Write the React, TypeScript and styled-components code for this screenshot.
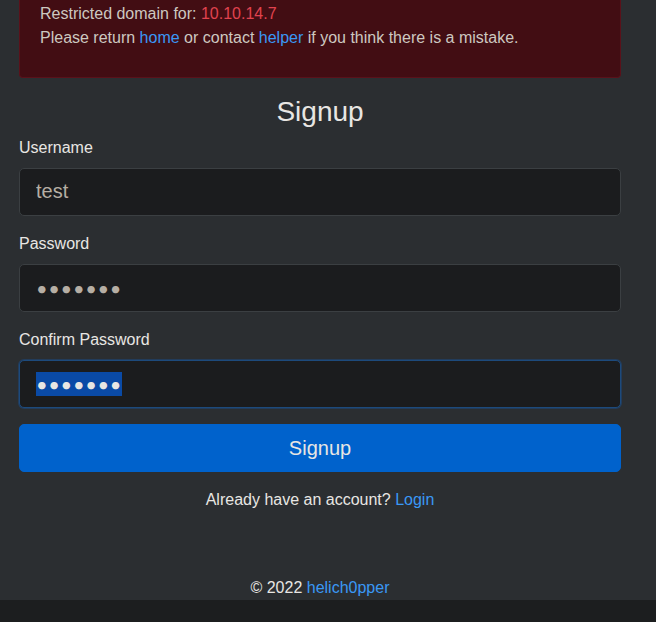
import React, { useEffect, useRef } from "react";
import styled, { createGlobalStyle } from "styled-components";

const GlobalStyle = createGlobalStyle`
  html, body {
    margin: 0;
    padding: 0;
    background: #1c1e1f;
  }
  body {
    font-family: "Liberation Sans", Arial, sans-serif;
    font-size: 16px;
    line-height: 1.5;
    color: #e8e6e3;
  }
  * { box-sizing: border-box; }
`;

const Page = styled.div`
  background: #2b2e31;
  padding: 0 35px 0 19px;
  overflow: hidden;
`;

const Alert = styled.div`
  background: #420d13;
  border: 1px solid #5a111a;
  border-top: none;
  border-radius: 0 0 4px 4px;
  padding: 2px 20px 11px;
  margin-bottom: 17px;
  color: #cdc8c0;
`;

const AlertLine = styled.p<{ $last?: boolean }>`
  margin: 0 0 ${(p) => (p.$last ? "16px" : "0")};
`;

const Danger = styled.span`
  color: #e0434f;
`;

const Link = styled.a`
  color: #3a98f5;
  text-decoration: none;
`;

const Title = styled.h3`
  margin: 0 0 7px;
  font-size: 28px;
  font-weight: 500;
  line-height: 1.2;
  text-align: center;
  color: #e8e6e3;
`;

const Group = styled.div`
  margin-bottom: 16px;
`;

const Label = styled.label`
  display: block;
  margin-bottom: 8px;
  color: #e8e6e3;
`;

const Input = styled.input`
  display: block;
  width: 100%;
  height: 48px;
  padding: 8px 16px;
  font-family: ${(p) =>
    p.type === "password"
      ? `Lato, "Liberation Sans", sans-serif`
      : `"Liberation Sans", Arial, sans-serif`};
  letter-spacing: ${(p) => (p.type === "password" ? "0.7px" : "normal")};
  font-size: 20px;
  line-height: 1.5;
  color: #b6aea4;
  background: #1b1c1e;
  border: 1px solid #3b3f42;
  border-radius: 5px;
  outline: none;
  &:focus {
    border-color: #1d4a7c;
    box-shadow: 0 0 0 1px rgba(28, 70, 120, 0.6);
    color: #e8e6e3;
  }
  &::selection {
    background: #0a4aa6;
    color: #e8e6e3;
  }
`;

const Button = styled.button`
  display: block;
  width: 100%;
  height: 48px;
  padding: 8px 16px;
  font-family: "Liberation Sans", Arial, sans-serif;
  font-size: 20px;
  line-height: 1.5;
  color: #e8e6e3;
  background: #0062cc;
  border: 1px solid #0062cc;
  border-radius: 5px;
  cursor: pointer;
`;

const Alt = styled.p`
  margin: 16px 0 64px;
  text-align: center;
  color: #e8e6e3;
`;

const Footer = styled.footer`
  text-align: center;
  color: #e8e6e3;
  line-height: 24px;
`;

const Band = styled.div`
  height: 22px;
  background: #1c1e1f;
`;

export default function App() {
  const ref = useRef<HTMLInputElement>(null);
  useEffect(() => {
    if (ref.current) {
      ref.current.focus();
      ref.current.select();
    }
  }, []);
  return (
    <>
      <GlobalStyle />
      <Page>
        <Alert>
          <AlertLine>
            Restricted domain for: <Danger>10.10.14.7</Danger>
          </AlertLine>
          <AlertLine $last>
            Please return <Link href="#">home</Link> or contact{" "}
            <Link href="#">helper</Link> if you think there is a mistake.
          </AlertLine>
        </Alert>
        <Title>Signup</Title>
        <form onSubmit={(e) => e.preventDefault()}>
          <Group>
            <Label>Username</Label>
            <Input type="text" defaultValue="test" />
          </Group>
          <Group>
            <Label>Password</Label>
            <Input type="password" defaultValue="1234567" />
          </Group>
          <Group>
            <Label>Confirm Password</Label>
            <Input ref={ref} type="password" defaultValue="1234567" />
          </Group>
          <Button type="submit">Signup</Button>
        </form>
        <Alt>
          Already have an account? <Link href="#">Login</Link>
        </Alt>
        <Footer>
          © 2022 <Link href="#">helich0pper</Link>
        </Footer>
      </Page>
      <Band />
    </>
  );
}
